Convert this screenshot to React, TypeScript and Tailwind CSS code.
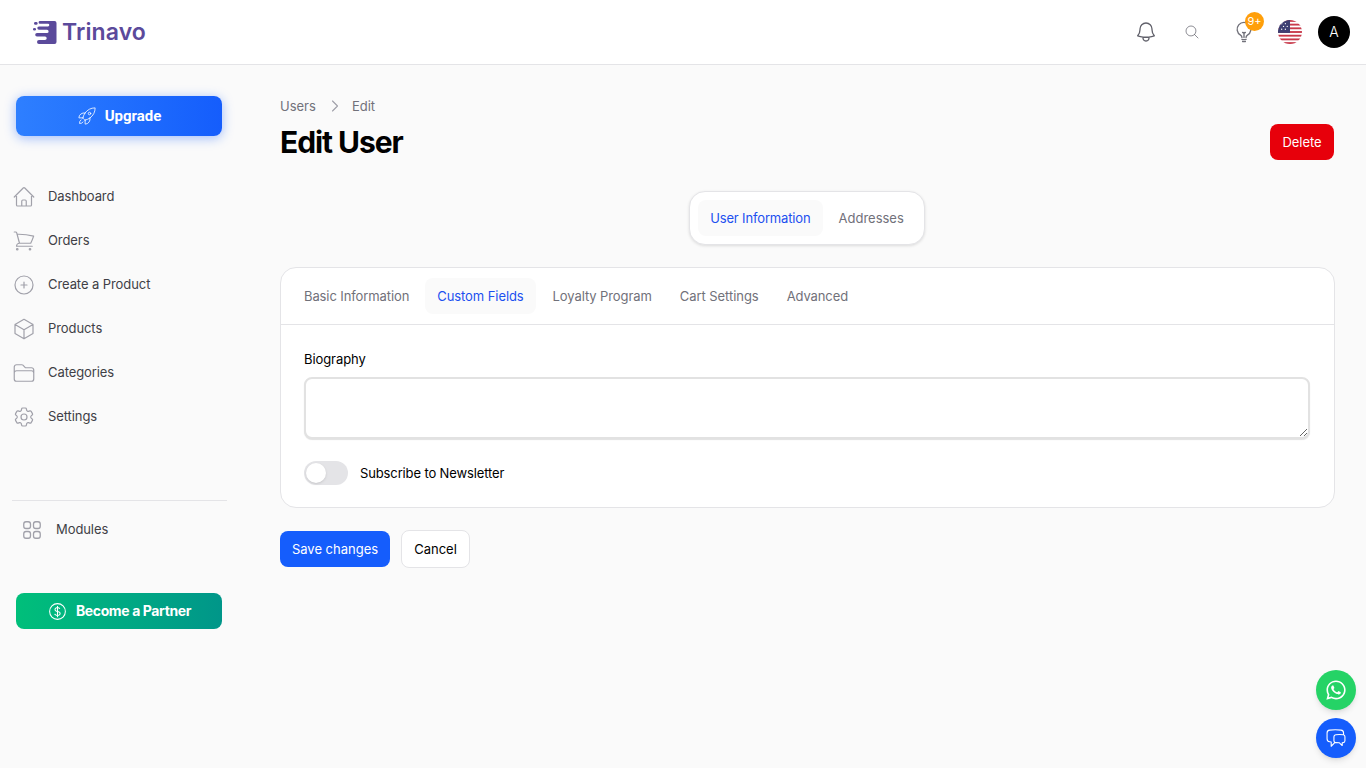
import { FaWhatsapp } from "react-icons/fa";
import {
  HiOutlineBell,
  HiOutlineChatBubbleLeftRight,
  HiOutlineCog6Tooth,
  HiOutlineCube,
  HiOutlineCurrencyDollar,
  HiOutlineFolder,
  HiOutlineHome,
  HiOutlineLightBulb,
  HiOutlineMagnifyingGlass,
  HiOutlinePlusCircle,
  HiOutlineRocketLaunch,
  HiOutlineShoppingCart,
  HiOutlineSquares2X2,
} from "react-icons/hi2";
import { ChevronRight } from "lucide-react";

const navItems = [
  { label: "Dashboard", icon: HiOutlineHome },
  { label: "Orders", icon: HiOutlineShoppingCart },
  { label: "Create a Product", icon: HiOutlinePlusCircle },
  { label: "Products", icon: HiOutlineCube },
  { label: "Categories", icon: HiOutlineFolder },
  { label: "Settings", icon: HiOutlineCog6Tooth },
];

const formTabs = [
  { label: "Basic Information", className: "tracking-[-0.1px] text-[#71717a]" },
  { label: "Custom Fields", className: "rounded-lg bg-[#fafafa] tracking-[-0.08px] text-[#1c50f0]" },
  { label: "Loyalty Program", className: "ml-px tracking-[-0.1px] text-[#71717a]" },
  { label: "Cart Settings", className: "tracking-[-0.05px] text-[#71717a]" },
  { label: "Advanced", className: "tracking-[-0.1px] text-[#71717a]" },
];

const flagStripes = [0, 2, 4, 6, 8, 10, 12];

function Logo() {
  return (
    <div className="flex items-center gap-[5px]">
      <svg width="24" height="24" viewBox="0 0 24 24" fill="#5b4a9b">
        <path d="M7 1h14.5a2 2 0 0 1 2 2v19a2 2 0 0 1-2 2H6a2 2 0 0 1 0-4h6a1.6 1.6 0 0 0 0-3.4H4a1.8 1.8 0 0 1 0-3.6h10a1.6 1.6 0 0 0 0-3.2H6a1.7 1.7 0 0 1 0-3.4h9a1.3 1.3 0 0 0 0-2.6H7A1.2 1.2 0 0 1 7 1z" />
        <rect x="1" y="2" width="3.6" height="2.8" rx="1.4" />
        <rect x="0" y="8" width="3" height="2.6" rx="1.3" />
      </svg>
      <span className="text-[23px] font-semibold leading-none tracking-[0.1px] text-[#5b4a9b]">Trinavo</span>
    </div>
  );
}

function Flag() {
  return (
    <svg width="24" height="24" viewBox="0 0 13 13" className="rounded-full">
      <rect width="13" height="13" fill="#fff" />
      {flagStripes.map((y) => (
        <rect key={y} y={y} width="13" height="1" fill="#c8394a" />
      ))}
      <rect width="6.5" height="7" fill="#3f3f73" />
      <circle cx="2" cy="2" r="0.35" fill="#fff" />
      <circle cx="4" cy="2" r="0.35" fill="#fff" />
      <circle cx="3" cy="3.5" r="0.35" fill="#fff" />
      <circle cx="5" cy="3.5" r="0.35" fill="#fff" />
      <circle cx="2" cy="5" r="0.35" fill="#fff" />
      <circle cx="4" cy="5" r="0.35" fill="#fff" />
    </svg>
  );
}

function Header() {
  return (
    <header className="flex h-[65px] items-center justify-between border-b border-[#e4e4e7] bg-white pl-[33px] pr-4">
      <Logo />
      <div className="flex items-center">
        <HiOutlineBell size={24} strokeWidth={1.3} className="text-[#60606a]" />
        <HiOutlineMagnifyingGlass size={16} strokeWidth={1.2} className="ml-[26px] text-[#71717a]" />
        <div className="relative ml-[33px]">
          <HiOutlineLightBulb size={22} strokeWidth={1.5} className="text-[#71717a]" />
          <span className="absolute -right-[9px] -top-[9px] flex h-[19px] w-[19px] items-center justify-center rounded-full bg-[#ff9f0a] text-[11px] text-white">
            9+
          </span>
        </div>
        <div className="ml-[23px]">
          <Flag />
        </div>
        <div className="ml-4 flex h-8 w-8 items-center justify-center rounded-full bg-black text-sm font-light text-white">
          A
        </div>
      </div>
    </header>
  );
}

function Sidebar() {
  return (
    <aside className="w-[240px] shrink-0 pt-[31px]">
      <button className="ml-4 flex h-10 w-[206px] items-center justify-center gap-2 rounded-lg bg-gradient-to-r from-[#2e7fff] to-[#155dfc] font-['Roboto',sans-serif] text-[15px] font-bold text-white shadow-[0_2px_12px_rgba(21,93,252,0.4)]">
        <HiOutlineRocketLaunch size={20} strokeWidth={1.2} className="text-white/80" />
        Upgrade
      </button>
      <nav className="mt-[39px] flex flex-col">
        {navItems.map((item) => (
          <div key={item.label} className="flex h-11 items-center gap-3 pl-3 text-[13px] tracking-[-0.08px] text-[#3f3f46]">
            <item.icon size={24} strokeWidth={1.2} className="text-[#a1a1aa]" />
            {item.label}
          </div>
        ))}
      </nav>
      <div className="ml-3 mt-[61px] w-[215px] border-t border-[#e4e4e7]" />
      <div className="mt-[7px] flex h-11 items-center gap-3 pl-5 text-[13px] tracking-[-0.08px] text-[#3f3f46]">
        <HiOutlineSquares2X2 size={24} strokeWidth={1.3} className="text-[#a1a1aa]" />
        Modules
      </div>
      <button className="ml-4 mt-[41px] flex h-9 w-[206px] items-center justify-center gap-2 rounded-lg bg-gradient-to-r from-[#00bf7a] to-[#009689] text-sm font-bold tracking-[-0.38px] text-white">
        <HiOutlineCurrencyDollar size={21} strokeWidth={1.2} />
        Become a Partner
      </button>
    </aside>
  );
}

function Main() {
  return (
    <main className="min-w-0 flex-1 pl-10 pr-8 pt-[31px]">
      <div className="flex items-center gap-2 text-[13px] leading-5 text-[#71717a]">
        <span>Users</span>
        <ChevronRight size={20} strokeWidth={1.3} className="-mr-px ml-px text-[#9f9fa9]" />
        <span>Edit</span>
      </div>
      <div className="mt-[8px] flex items-center justify-between">
        <h1 className="text-[30px] font-bold leading-9 tracking-[-1.05px] text-black">Edit User</h1>
        <button className="h-9 w-16 rounded-lg bg-[#e7000b] pt-px text-[13px] tracking-[-0.08px] text-white">Delete</button>
      </div>

      <div className="mt-[31px] flex justify-center">
        <div className="flex items-center rounded-2xl border border-[#e4e4e7] bg-white py-2 pl-2 pr-1 shadow-[0_1px_3px_rgba(0,0,0,0.12)]">
          <div className="flex h-9 items-center rounded-lg bg-[#fafafa] px-3 pt-px text-[13px] tracking-[-0.15px] text-[#1c50f0]">User Information</div>
          <div className="flex h-9 items-center px-4 pt-px text-[13px] text-[#71717a]">Addresses</div>
        </div>
      </div>

      <div className="-mr-px mt-[22px] rounded-2xl border border-[#e4e4e7] bg-white">
        <div className="flex h-[57px] items-center gap-1 border-b border-[#e4e4e7] px-[11px]">
          {formTabs.map((tab) => (
            <div key={tab.label} className={`flex h-9 items-center px-3 pt-px text-[13px] ${tab.className}`}>
              {tab.label}
            </div>
          ))}
        </div>
        <div className="pb-[22px] pl-[23px] pr-6 pt-6">
          <label className="block text-[13px] leading-5 tracking-[-0.08px] text-black">Biography</label>
          <textarea className="mt-2 block h-[62px] w-full rounded-lg border-2 border-[#e2e2e2] bg-white shadow-[0_1px_1px_rgba(0,0,0,0.12)]" />
          <div className="mt-[22px] flex items-center gap-3">
            <div className="flex h-6 w-11 items-center rounded-full bg-[#e4e4e7] pl-[2px]">
              <div className="h-5 w-5 rounded-full bg-white shadow-sm" />
            </div>
            <span className="pt-[2px] text-[13px] tracking-[-0.13px] text-black">Subscribe to Newsletter</span>
          </div>
        </div>
      </div>

      <div className="mt-[22px] flex items-center gap-[11px]">
        <button className="h-9 w-[110px] rounded-lg bg-[#155dfc] pt-[2px] text-[13px] text-white">Save changes</button>
        <button className="h-[38px] w-[69px] rounded-lg border border-[#e4e4e7] bg-white pt-[2px] text-[13px] text-black">Cancel</button>
      </div>
    </main>
  );
}

export default function App() {
  return (
    <div className="relative h-[768px] overflow-hidden bg-[#fafafa] font-['Inter',sans-serif]">
      <Header />
      <div className="flex">
        <Sidebar />
        <Main />
      </div>
      <div className="fixed bottom-[58px] right-[10px] flex h-10 w-10 items-center justify-center rounded-full bg-[#25d366] text-white shadow-md">
        <FaWhatsapp size={22} />
      </div>
      <div className="fixed bottom-[10px] right-[10px] flex h-10 w-10 items-center justify-center rounded-full bg-[#155dfc] text-white shadow-md">
        <HiOutlineChatBubbleLeftRight size={22} strokeWidth={1.2} />
      </div>
    </div>
  );
}
